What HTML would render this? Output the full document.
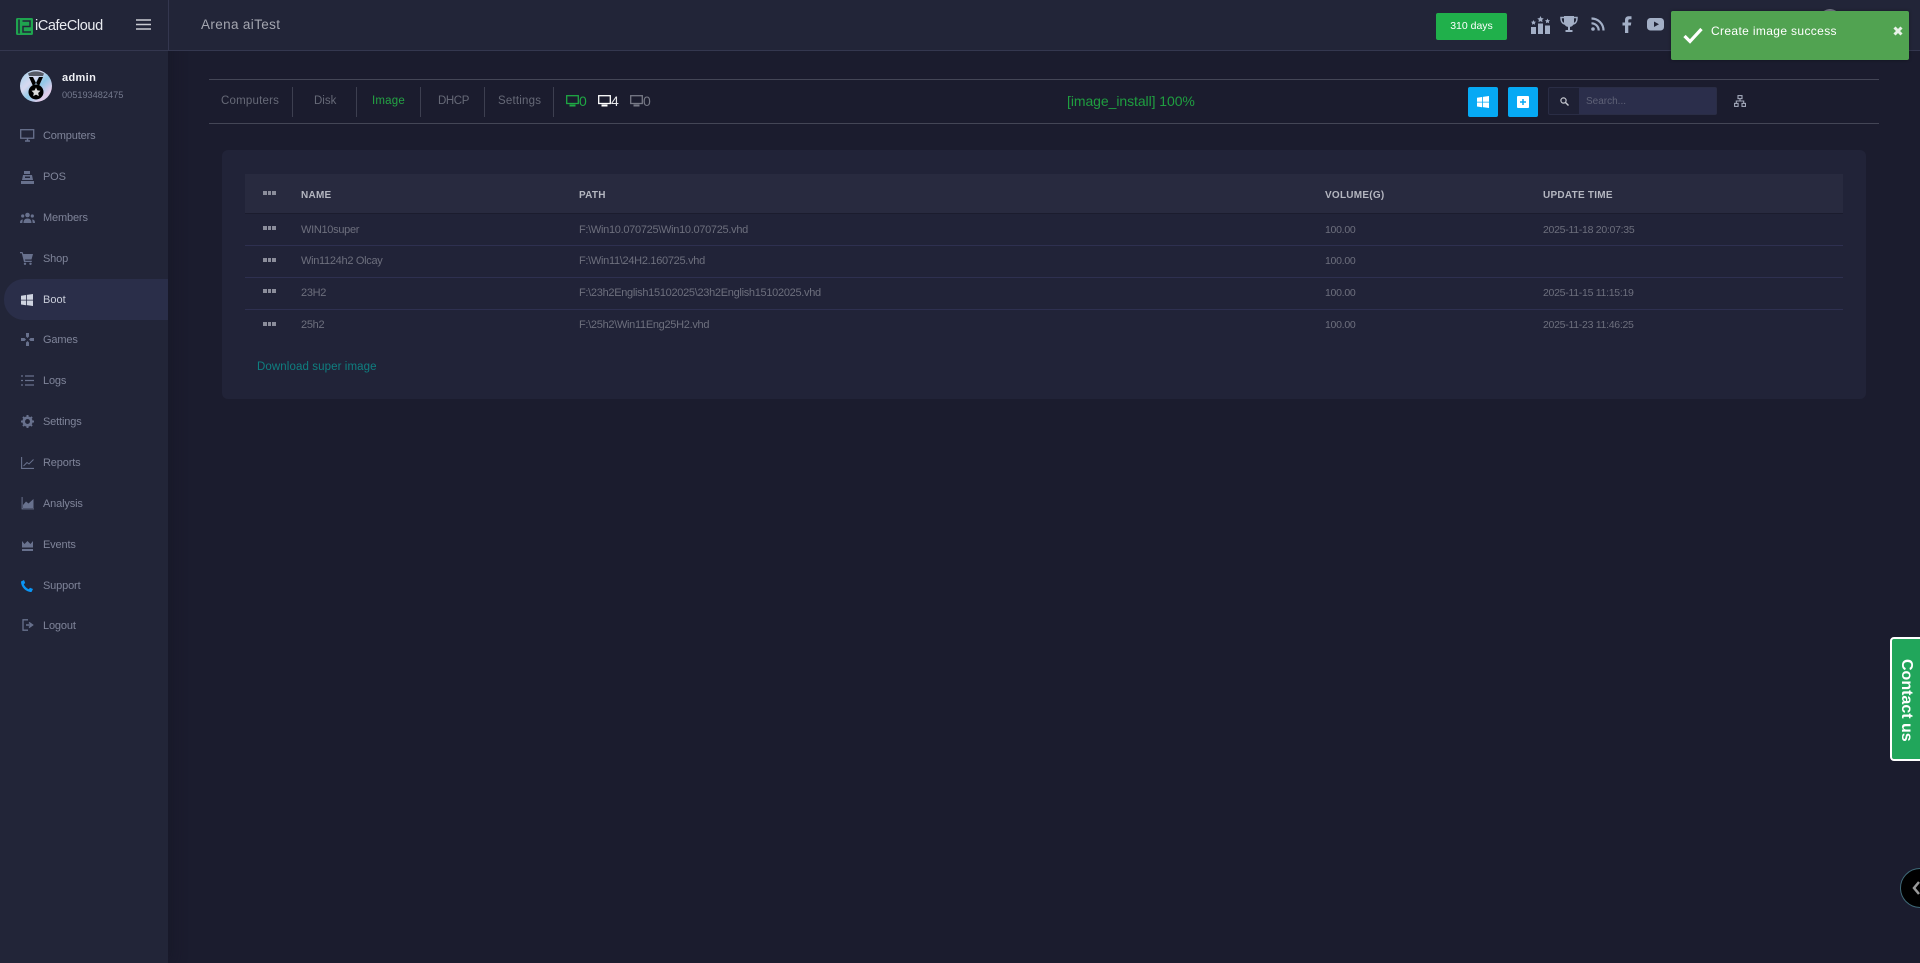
<!DOCTYPE html>
<html lang="en">
<head>
<meta charset="utf-8">
<title>iCafeCloud - Boot</title>
<style>
*{box-sizing:border-box;margin:0;padding:0}
html,body{width:1920px;height:963px;overflow:hidden;background:#1b1c2e;font-family:"Liberation Sans",sans-serif}
.t{position:absolute;white-space:nowrap;line-height:20px;height:20px}
.b{position:absolute}
svg{position:absolute;display:block}
.menu{font-size:11px;color:#7f8499;left:43px;letter-spacing:-.15px}
.tab{font-size:11.5px;color:#666977;letter-spacing:.2px}
.sep{position:absolute;top:87px;width:1px;height:30px;background:#3d3f50}
.th{font-size:10px;font-weight:bold;color:#b4b6c0;letter-spacing:.25px}
.td{font-size:11px;color:#6d6f7d;letter-spacing:-.3px}
.sm{font-size:10.5px;letter-spacing:-.28px}
.row{position:absolute;left:245px;width:1598px;height:1px;background:#2e3050}
.dots{position:absolute;width:13px;height:4px;left:263px}
.dots i{position:absolute;top:0;height:4px;background:#8b8d9b}
.dots i:nth-child(1){left:0;width:4px}.dots i:nth-child(2){left:5px;width:3px}.dots i:nth-child(3){left:9px;width:4px}
</style>
</head>
<body>
<!-- sidebar -->
<div class="b" style="left:0;top:0;width:168px;height:963px;background:#222538;box-shadow:6px 0 12px rgba(20,20,35,.35)"></div>
<!-- header -->
<div class="b" style="left:0;top:0;width:1920px;height:51px;background:#222538;border-bottom:1px solid #34374f"></div>
<div class="b" style="left:168px;top:0;width:1px;height:50px;background:#34374f"></div>

<svg style="left:16px;top:18px" width="18" height="17" viewBox="0 0 18 17"><rect width="17" height="17" rx="1.5" fill="#1fa44f"/><path d="M3 1.500V15.500M6.500 3H14V8.500H7V14H15" fill="none" stroke="#222538" stroke-width="1.500"/></svg>
<div class="t" style="left:35px;top:16px;font-size:14.5px;color:#e9ebf0;letter-spacing:-.4px">iCafeCloud</div>
<svg style="left:136px;top:19px" width="15" height="11" viewBox="0 0 15 11"><path d="M0 1H15M0 5.500H15M0 10H15" stroke="#c9cbd2" stroke-width="1.500"/></svg>
<div class="t" style="left:201px;top:15px;font-size:13.5px;color:#a4a6b0;letter-spacing:.36px">Arena aiTest</div>

<div class="b" style="left:1436px;top:13px;width:71px;height:27px;border-radius:2px;background:#20b04b"></div>
<div class="t" style="left:1436px;top:15.5px;width:71px;text-align:center;font-size:10.5px;color:#fff">310 days</div>

<!-- header icons -->
<svg style="left:1530px;top:15px" width="21" height="20" viewBox="0 0 21 20" fill="#a3afc6"><path d="M1 12h5v7H1zM8 8.500h5V19H8zM15 10.500h5V19h-5z"/><path d="M10.500 1l1 2.100 2.200.3-1.600 1.500.4 2.200-2-1-2 1 .4-2.200-1.600-1.500 2.200-.3zM3.500 5l.8 1.600 1.700.2-1.200 1.200.3 1.700-1.600-.8-1.600.8.3-1.700L1 6.800l1.700-.2zM17.500 3.500l.8 1.600 1.700.2-1.200 1.200.3 1.700-1.600-.8-1.600.8.3-1.700-1.200-1.200 1.700-.2z"/></svg>
<svg style="left:1560px;top:15px" width="18" height="18" viewBox="0 0 18 18" fill="none"><path d="M4 1h10v6c0 3-2 5-5 5s-5-2-5-5z" fill="#a3afc6"/><path d="M4 2.500H1c0 4 1 6 4 6.500M14 2.500h3c0 4-1 6-4 6.500" stroke="#a3afc6" stroke-width="1.500"/><path d="M8 11.500h2V15h2.500v2h-7v-2H8z" fill="#a3afc6"/></svg>
<svg style="left:1591px;top:17px" width="14" height="14" viewBox="0 0 14 14" fill="none"><circle cx="2" cy="12" r="1.800" fill="#a3afc6"/><path d="M.5 6.300a7.200 7.200 0 0 1 7.200 7.200M.5 1.500a12 12 0 0 1 12 12" stroke="#a3afc6" stroke-width="2.200"/></svg>
<svg style="left:1622px;top:16px" width="10" height="17" viewBox="0 0 10 17"><path d="M3 17V9.500H.5V6.500H3V4.300C3 1.600 4.500.3 6.800.3H9.500V3.200H7.700C6.600 3.200 6.300 3.700 6.300 4.600V6.500H9.300L8.800 9.500H6.300V17z" fill="#a3afc6"/></svg>
<svg style="left:1647px;top:18px" width="18" height="13" viewBox="0 0 18 13"><rect width="17" height="12.500" rx="3.500" fill="#a3afc6"/><path d="M7 3.500L12 6.250 7 9z" fill="#222538"/></svg>
<div class="b" style="left:1820px;top:9px;width:20px;height:10px;border-radius:10px 10px 0 0;background:#777a88"></div>

<!-- toast -->
<div class="b" style="left:1671px;top:11px;width:238px;height:49px;border-radius:2px;background:#51a351;box-shadow:0 0 3px rgba(0,0,0,.35)"></div>
<svg style="left:1683px;top:27px" width="20" height="17" viewBox="0 0 20 17"><path d="M1.500 9L7 14.500 18.500 2" fill="none" stroke="#fff" stroke-width="3.200"/></svg>
<div class="t" style="left:1711px;top:21px;font-size:12px;color:#fff;letter-spacing:.36px">Create image success</div>
<svg style="left:1893px;top:26px" width="10" height="10" viewBox="0 0 10 10"><path d="M1.500 1.500L8.500 8.500M8.500 1.500L1.500 8.500" stroke="#e8f2e8" stroke-width="3"/></svg>

<!-- profile -->
<svg style="left:20px;top:70px" width="32" height="32" viewBox="0 0 32 32">
<defs><linearGradient id="h" x1="0" y1="0" x2="1" y2="1"><stop offset="0" stop-color="#9fd3ee"/><stop offset=".35" stop-color="#d8d9ef"/><stop offset=".55" stop-color="#8fc7e6"/><stop offset=".8" stop-color="#e4cdea"/><stop offset="1" stop-color="#a8e0e6"/></linearGradient></defs>
<circle cx="16" cy="16" r="16" fill="url(#h)"/>
<path d="M8 3.500A16 16 0 0 1 24 3.500L23 6H9z" fill="#555a66"/>
<path d="M9 7h4l3 6-3 3zM23 7h-4l-3 6 3 3z" fill="#000"/>
<circle cx="16" cy="22" r="7.500" fill="#000"/>
<path d="M16 17.500l1.400 2.900 3.100.4-2.300 2.200.6 3.100-2.800-1.500-2.800 1.500.6-3.100-2.300-2.200 3.100-.4z" fill="#ddd"/>
</svg>
<div class="t" style="left:62px;top:68px;font-size:11px;font-weight:bold;color:#f0f1f5;letter-spacing:.35px">admin</div>
<div class="t" style="left:62px;top:85px;font-size:9.200px;color:#757a8e;letter-spacing:0">005193482475</div>

<!-- active item -->
<div class="b" style="left:4px;top:279px;width:164px;height:41px;background:#2a2e49;border-radius:20px 0 0 20px"></div>

<!-- menu -->
<svg style="left:20px;top:129px" width="15" height="13" viewBox="0 0 15 13" fill="none"><rect x=".7" y=".7" width="13" height="8.500" stroke="#68718d" stroke-width="1.300"/><path d="M5 12h5M7.500 9.500V12" stroke="#68718d" stroke-width="1.500"/></svg>
<div class="t menu" style="top:126px">Computers</div>
<svg style="left:21px;top:171px" width="13" height="13" viewBox="0 0 13 13" fill="#68718d"><path d="M3 0h6v3H3zM2 4h9l1 5H1zM0 10h13v3H0z"/><path d="M4 5.500h5v1.500H4z" fill="#222538"/></svg>
<div class="t menu" style="top:167px">POS</div>
<svg style="left:20px;top:212px" width="15" height="12" viewBox="0 0 15 12" fill="#68718d"><circle cx="7.500" cy="3" r="2.300"/><circle cx="2.700" cy="4" r="1.600"/><circle cx="12.300" cy="4" r="1.600"/><path d="M3.500 11c0-3 1.500-4.500 4-4.500s4 1.500 4 4.500zM0 11c0-2.500 1-3.500 2.800-3.500L2.300 11zM15 11c0-2.500-1-3.500-2.800-3.500l.5 3.500z"/></svg>
<div class="t menu" style="top:208px">Members</div>
<svg style="left:20px;top:252px" width="13" height="13" viewBox="0 0 13 13" fill="#68718d"><path d="M0 0h2.500l.8 2H13l-1.500 5.500H5l.3 1.200h6.500V10H4L1.800 1.300H0z"/><circle cx="5" cy="11.800" r="1.200"/><circle cx="10.500" cy="11.800" r="1.200"/></svg>
<div class="t menu" style="top:249px">Shop</div>
<svg style="left:21px;top:294px" width="12" height="12" viewBox="0 0 12 12" fill="#cfd4e0"><path d="M0 1.800L5 1v4.700H0zM5.800.9L12 0v5.700H5.800zM0 6.500h5v4.700L0 10.500zM5.800 6.500H12V12l-6.200-.9z"/></svg>
<div class="t" style="left:43px;top:290px;font-size:11px;color:#c9cdd9;letter-spacing:0">Boot</div>
<svg style="left:21px;top:333px" width="13" height="13" viewBox="0 0 13 13" fill="#68718d"><path d="M5 0h3v3.500L6.500 5 5 3.500zM5 13h3V9.500L6.500 8 5 9.500zM0 5h3.500L5 6.500 3.500 8H0zM13 5H9.500L8 6.500 9.500 8H13z"/></svg>
<div class="t menu" style="top:330px">Games</div>
<svg style="left:21px;top:375px" width="13" height="11" viewBox="0 0 13 11"><path d="M0 1h2M4 1h9M0 5.500h2M4 5.500h9M0 10h2M4 10h9" stroke="#68718d" stroke-width="1.300"/></svg>
<div class="t menu" style="top:371px">Logs</div>
<svg style="left:21px;top:415px" width="13" height="13" viewBox="0 0 13 13"><circle cx="6.500" cy="6.500" r="3.800" fill="none" stroke="#68718d" stroke-width="2.700"/><path d="M6.500 0v13M0 6.500h13M2 2l9 9M11 2l-9 9" stroke="#68718d" stroke-width="2" stroke-dasharray="2 9"/></svg>
<div class="t menu" style="top:412px">Settings</div>
<svg style="left:21px;top:457px" width="13" height="12" viewBox="0 0 13 12" fill="none"><path d="M.6 0v11.400H13" stroke="#68718d" stroke-width="1.100"/><path d="M2.500 9L6 5.500 8 7l4.500-4.500" stroke="#68718d"/></svg>
<div class="t menu" style="top:453px">Reports</div>
<svg style="left:21px;top:497px" width="13" height="13" viewBox="0 0 13 13" fill="#68718d"><path d="M.6 0v12.400H13v-1H1.600V0z"/><path d="M2 11V8l3-3.500L7.500 6.500 12.500 2v9z"/></svg>
<div class="t menu" style="top:494px">Analysis</div>
<svg style="left:22px;top:541px" width="11" height="10" viewBox="0 0 11 10" fill="#68718d"><path d="M0 0l2.500 3L5.500 0l3 3L11 0v6.500H0zM0 8h11v2H0z"/></svg>
<div class="t menu" style="top:535px">Events</div>
<svg style="left:21px;top:580px" width="12" height="12" viewBox="0 0 12 12"><path d="M0 1.500L3 0l1.200 3L2.800 4.200C3.800 6.500 5.500 8.200 7.800 9.200L9 7.800l3 1.200-1.500 3C4.800 12 0 7 0 1.500z" fill="#0a95f5"/></svg>
<div class="t menu" style="top:576px">Support</div>
<svg style="left:22px;top:619px" width="12" height="12" viewBox="0 0 12 12" fill="none"><path d="M6 .8H1v10.400h5" stroke="#68718d" stroke-width="1.300"/><path d="M4 6h5M7 3.500L10.500 6 7 8.500" stroke="#68718d" stroke-width="1.500"/></svg>
<div class="t menu" style="top:616px">Logout</div>

<!-- tabs bar -->
<div class="b" style="left:209px;top:79px;width:1670px;height:1px;background:#444656"></div>
<div class="b" style="left:209px;top:123px;width:1670px;height:1px;background:#444656"></div>
<div class="t tab" style="left:221px;top:91px">Computers</div>
<div class="sep" style="left:292px"></div>
<div class="t tab" style="left:314px;top:91px;letter-spacing:0">Disk</div>
<div class="sep" style="left:356px"></div>
<div class="t tab" style="left:372px;top:91px;color:#24a344">Image</div>
<div class="sep" style="left:420px"></div>
<div class="t tab" style="left:438px;top:91px;letter-spacing:-.4px">DHCP</div>
<div class="sep" style="left:484px"></div>
<div class="t tab" style="left:498px;top:91px">Settings</div>
<div class="sep" style="left:553px"></div>

<svg style="left:566px;top:95px" width="13" height="12" viewBox="0 0 13 12" fill="none"><rect x=".7" y=".7" width="11.600" height="7.800" stroke="#1fa844" stroke-width="1.300"/><path d="M3.500 10.500h6" stroke="#1fa844" stroke-width="2"/></svg>
<div class="t" style="left:579px;top:91px;font-size:14px;color:#1fa844">0</div>
<svg style="left:598px;top:95px" width="13" height="12" viewBox="0 0 13 12" fill="none"><rect x=".7" y=".7" width="11.600" height="7.800" stroke="#fff" stroke-width="1.300"/><path d="M3.500 10.500h6" stroke="#fff" stroke-width="2"/></svg>
<div class="t" style="left:611px;top:91px;font-size:14px;color:#e6e6ea">4</div>
<svg style="left:630px;top:95px" width="13" height="12" viewBox="0 0 13 12" fill="none"><rect x=".7" y=".7" width="11.600" height="7.800" stroke="#777986" stroke-width="1.300"/><path d="M3.500 10.500h6" stroke="#777986" stroke-width="2"/></svg>
<div class="t" style="left:643px;top:91px;font-size:14px;color:#777986">0</div>

<div class="t" style="left:1067px;top:91px;font-size:14px;color:#1f9e40;letter-spacing:-.07px">[image_install] 100%</div>

<div class="b" style="left:1468px;top:87px;width:30px;height:30px;border-radius:2px;background:#06a9f4"></div>
<svg style="left:1477px;top:96px" width="12" height="12" viewBox="0 0 12 12" fill="#fff"><path d="M0 1.800L5 1v4.700H0zM5.800.9L12 0v5.700H5.800zM0 6.500h5v4.700L0 10.500zM5.800 6.500H12V12l-6.200-.9z"/></svg>
<div class="b" style="left:1508px;top:87px;width:30px;height:30px;border-radius:2px;background:#06a9f4"></div>
<svg style="left:1517px;top:96px" width="12" height="12" viewBox="0 0 12 12"><rect width="12" height="12" rx="1" fill="#fff"/><path d="M6 3v6M3 6h6" stroke="#06a9f4" stroke-width="1.500"/></svg>

<div class="b" style="left:1548px;top:87px;width:169px;height:28px;border:1px solid #2a2d45;border-radius:2px;background:#1e2034"></div>
<div class="b" style="left:1579px;top:88px;width:137px;height:26px;background:#2b2e4b"></div>
<svg style="left:1560px;top:97px" width="9" height="9" viewBox="0 0 9 9" fill="none"><circle cx="3.500" cy="3.500" r="2.600" stroke="#c6c8d0" stroke-width="1.200"/><path d="M5.500 5.500L8.500 8.500" stroke="#c6c8d0" stroke-width="1.400"/></svg>
<div class="t" style="left:1586px;top:92px;font-size:10px;color:#5f6277;letter-spacing:0">Search...</div>
<svg style="left:1734px;top:95px" width="12" height="12" viewBox="0 0 12 12" fill="none" stroke="#a3a9bb" stroke-width="1.100"><rect x="4" y=".6" width="4" height="3"/><rect x=".6" y="8.400" width="3.500" height="3"/><rect x="8" y="8.400" width="3.500" height="3"/><path d="M6 3.600V6M2.300 8.400V6h7.400v2.400"/></svg>

<!-- card -->
<div class="b" style="left:222px;top:150px;width:1644px;height:249px;border-radius:6px;background:#212338"></div>
<div class="b" style="left:245px;top:174px;width:1598px;height:40px;background:#282a3f;border-bottom:1px solid #1b1c2e"></div>

<div class="dots" style="top:191px"><i></i><i></i><i></i></div>
<div class="t th" style="left:301px;top:186px">NAME</div>
<div class="t th" style="left:579px;top:186px">PATH</div>
<div class="t th" style="left:1325px;top:186px">VOLUME(G)</div>
<div class="t th" style="left:1543px;top:186px">UPDATE TIME</div>

<div class="dots" style="top:226px"><i></i><i></i><i></i></div>
<div class="t td" style="left:301px;top:219.500px">WIN10super</div>
<div class="t td" style="left:579px;top:219.500px">F:\Win10.070725\Win10.070725.vhd</div>
<div class="t td sm" style="left:1325px;top:219.500px">100.00</div>
<div class="t td sm" style="left:1543px;top:219.500px">2025-11-18 20:07:35</div>
<div class="row" style="top:245px"></div>

<div class="dots" style="top:258px"><i></i><i></i><i></i></div>
<div class="t td" style="left:301px;top:250.500px">Win1124h2 Olcay</div>
<div class="t td" style="left:579px;top:250.500px">F:\Win11\24H2.160725.vhd</div>
<div class="t td sm" style="left:1325px;top:250.500px">100.00</div>
<div class="row" style="top:277px"></div>

<div class="dots" style="top:289px"><i></i><i></i><i></i></div>
<div class="t td" style="left:301px;top:282.500px">23H2</div>
<div class="t td" style="left:579px;top:282.500px">F:\23h2English15102025\23h2English15102025.vhd</div>
<div class="t td sm" style="left:1325px;top:282.500px">100.00</div>
<div class="t td sm" style="left:1543px;top:282.500px">2025-11-15 11:15:19</div>
<div class="row" style="top:309px"></div>

<div class="dots" style="top:322px"><i></i><i></i><i></i></div>
<div class="t td" style="left:301px;top:314.500px">25h2</div>
<div class="t td" style="left:579px;top:314.500px">F:\25h2\Win11Eng25H2.vhd</div>
<div class="t td sm" style="left:1325px;top:314.500px">100.00</div>
<div class="t td sm" style="left:1543px;top:314.500px">2025-11-23 11:46:25</div>

<div class="t" style="left:257px;top:357px;font-size:11.500px;color:#0f7f80;letter-spacing:.1px">Download super image</div>

<!-- contact tab -->
<div class="b" style="left:1890px;top:637px;width:34px;height:124px;border:2.500px solid #fff;border-radius:4px 0 0 4px;background:#21a65b"></div>
<div class="t" style="left:1866px;top:689px;width:80px;text-align:center;font-size:16px;font-weight:bold;color:#fff;transform:rotate(90deg)">Contact us</div>

<!-- side circle -->
<div class="b" style="left:1900px;top:868px;width:40px;height:40px;border-radius:50%;background:#000;border:1px solid #3f6a78"></div>
<svg style="left:1912px;top:880px" width="8" height="16" viewBox="0 0 8 16"><path d="M7 2L2 8l5 6" fill="none" stroke="#9a9a9a" stroke-width="2.500"/></svg>
</body>
</html>
